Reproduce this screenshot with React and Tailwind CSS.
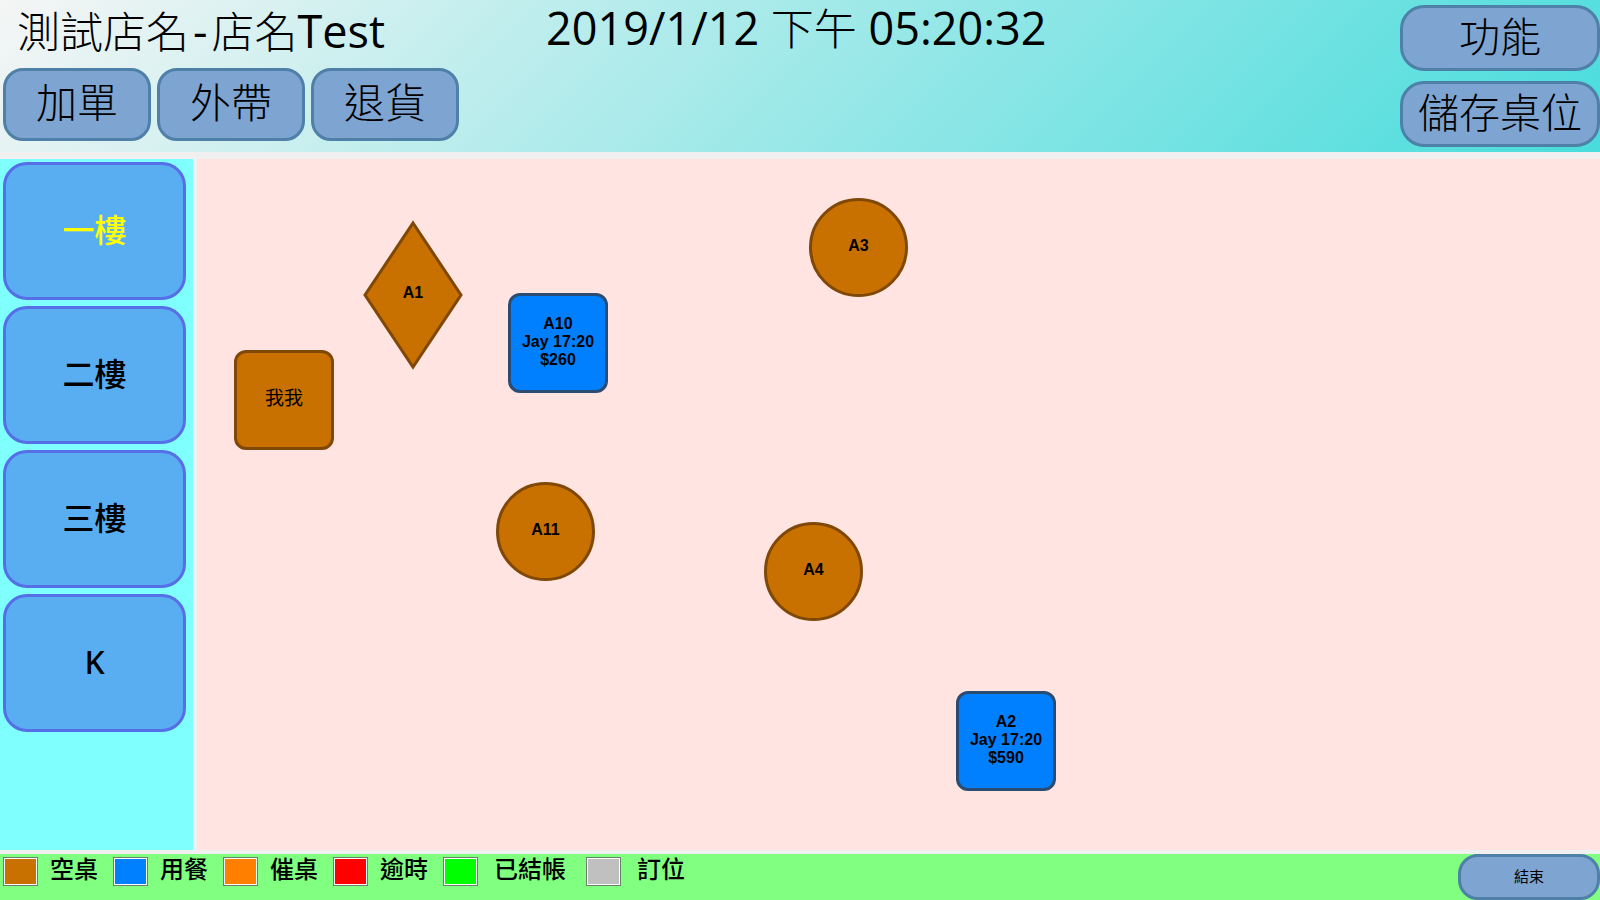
import React, { useState } from "react";

const actions = ["加單", "外帶", "退貨"];
const floors = ["一樓", "二樓", "三樓", "K"];

const legend = [
  { label: "空桌", swatch: "bg-[#c87000]", item: "gap-3 w-[110px]" },
  { label: "用餐", swatch: "bg-[#0080ff]", item: "gap-3 w-[110px]" },
  { label: "催桌", swatch: "bg-[#ff8000]", item: "gap-3 w-[110px]" },
  { label: "逾時", swatch: "bg-[#ff0000]", item: "gap-3 w-[110px]" },
  { label: "已結帳", swatch: "bg-[#00ff00]", item: "gap-4 w-[143px]" },
  { label: "訂位", swatch: "bg-[#c0c0c0]", item: "gap-4" },
];

const tables = [
  { lines: ["A1"], shape: "diamond", place: "left-[166px] top-[61px]" },
  { lines: ["A3"], shape: "circle", place: "left-[612px] top-[39px]" },
  { lines: ["A10", "Jay 17:20", "$260"], shape: "busy", place: "left-[311px] top-[134px]" },
  { lines: ["我我"], shape: "square", place: "left-[37px] top-[191px]" },
  { lines: ["A11"], shape: "circle", place: "left-[299px] top-[323px]" },
  { lines: ["A4"], shape: "circle", place: "left-[567px] top-[363px]" },
  { lines: ["A2", "Jay 17:20", "$590"], shape: "busy", place: "left-[759px] top-[532px]" },
];

const shapes = {
  diamond: "h-[150px] w-[100px] pb-1",
  circle: "size-[99px] rounded-full border-3 border-[#804806] bg-[#c87000] pb-1",
  square: "size-[100px] rounded-xl border-3 border-[#804806] bg-[#c87000] pb-0.5",
  busy: "size-[100px] rounded-xl border-3 border-[#2b4c72] bg-[#0080ff] pb-0.5",
};

const steel = "border-3 border-[#4f80a8] bg-[#7ea4d2]";

function Table({ lines, shape, place }) {
  return (
    <button
      type="button"
      className={`absolute flex flex-col items-center justify-center text-base leading-[18px] font-bold ${place} ${shapes[shape]}`}
    >
      {shape === "diamond" && (
        <svg viewBox="0 0 100 150" className="absolute inset-0 h-full w-full" aria-hidden="true">
          <path d="M50 3 98 75 50 147 2 75Z" fill="#c87000" stroke="#804806" strokeWidth="3" />
        </svg>
      )}
      {lines.map((line) => (
        <span
          key={line}
          className={shape === "square" ? "relative text-[19px] font-normal" : "relative"}
        >
          {line}
        </span>
      ))}
    </button>
  );
}

export default function App() {
  const [floor, setFloor] = useState("一樓");

  return (
    <div className="flex min-h-screen flex-col gap-1 bg-[#f0f0f0] font-['Noto_Sans','Noto_Sans_CJK_TC',sans-serif] text-black">
      <header className="mb-[3px] flex h-[152px] bg-[linear-gradient(135deg,#f5f5f5_0%,#48dcdc_100%)]">
        <div className="flex w-[546px] shrink-0 flex-col pt-1 pl-[3px]">
          <h1 className="h-14 pl-[14px] text-[43px] leading-[54px] font-light whitespace-nowrap">
            測試店名
            <span className="px-1 font-['Open_Sans',sans-serif] text-[45px] leading-[54px] font-normal">-</span>
            店名
            <span className="font-['Open_Sans',sans-serif] text-[45px] leading-[54px] font-normal">Test</span>
          </h1>
          <nav className="mt-2 flex gap-1.5">
            {actions.map((a) => (
              <button
                key={a}
                type="button"
                className={`h-[73px] w-[148px] rounded-[20px] pb-1.5 text-[41px] leading-[56px] font-light ${steel}`}
              >
                {a}
              </button>
            ))}
          </nav>
        </div>
        <time className="grow font-['Open_Sans','Noto_Sans_CJK_TC',sans-serif] text-[45px] leading-[56px] whitespace-nowrap">
          2019/1/12 <span className="text-[43px] font-light">下午</span> 05:20:32
        </time>
        <div className="flex flex-col gap-[10px] pt-[5px]">
          {["功能", "儲存桌位"].map((a) => (
            <button
              key={a}
              type="button"
              className={`h-[66px] w-[200px] rounded-3xl pb-1.5 text-[41px] leading-[56px] font-light whitespace-nowrap ${steel}`}
            >
              {a}
            </button>
          ))}
        </div>
      </header>

      <div className="flex grow gap-1">
        <aside className="flex w-[193px] shrink-0 flex-col gap-1.5 bg-[#80ffff] p-[3px]">
          {floors.map((f) => (
            <button
              key={f}
              type="button"
              onClick={() => setFloor(f)}
              className={`h-[138px] w-[183px] rounded-3xl border-3 border-[#566ee8] bg-[#58aef0] pb-0.5 text-[32px] leading-10 font-medium ${
                f === floor ? "text-[#ffff00]" : ""
              }`}
            >
              {f}
            </button>
          ))}
        </aside>
        <main className="relative grow bg-[#ffe4e1] font-['Liberation_Sans','Noto_Sans_CJK_TC',sans-serif]">
          {tables.map((t) => (
            <Table key={t.lines[0]} {...t} />
          ))}
        </main>
      </div>

      <footer className="flex h-[46px] justify-between bg-[#80ff80]">
        <ul className="flex pt-[3px] pl-[3px]">
          {legend.map(({ label, swatch, item }) => (
            <li key={label} className={`flex items-start ${item}`}>
              <span className="h-[29px] w-[35px] shrink-0 border border-[#6b806b] bg-white p-px">
                <span className={`block h-full w-full ${swatch}`} />
              </span>
              <span className="text-2xl leading-6 font-medium whitespace-nowrap">{label}</span>
            </li>
          ))}
        </ul>
        <button type="button" className={`w-[142px] rounded-[20px] pb-0.5 text-[15px] ${steel}`}>
          結束
        </button>
      </footer>
    </div>
  );
}
